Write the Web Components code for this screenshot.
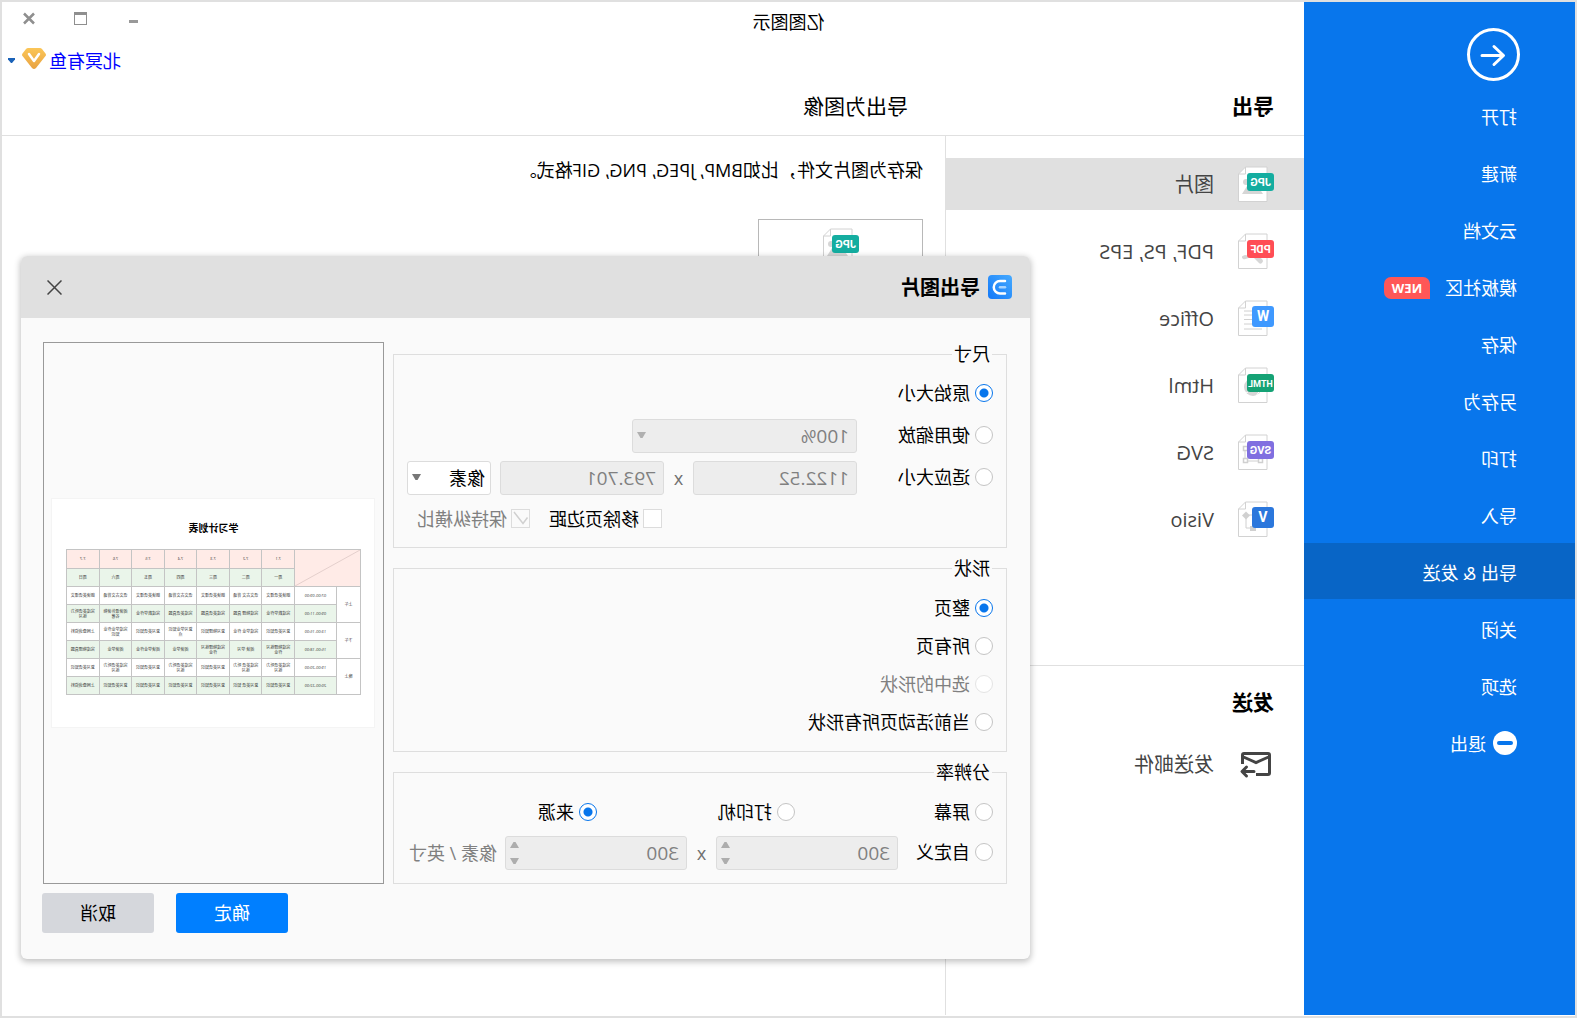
<!DOCTYPE html>
<html lang="zh-CN">
<head>
<meta charset="utf-8">
<title>亿图图示</title>
<style>
  html, body { margin: 0; }
  body {
    font-family: "Open Sans", "Noto Sans CJK SC", sans-serif;
    font-size: 18px; line-height: 24px; color: #000; background: #fff;
  }
</style>
</head>
<body>
<app-frame>
  <side-nav slot="nav">
    <nav-item>打开</nav-item>
    <nav-item>新建</nav-item>
    <nav-item>云文档</nav-item>
    <nav-item badge="NEW">模板社区</nav-item>
    <nav-item>保存</nav-item>
    <nav-item>另存为</nav-item>
    <nav-item>打印</nav-item>
    <nav-item>导入</nav-item>
    <nav-item current>导出 &amp; 发送</nav-item>
    <nav-item>关闭</nav-item>
    <nav-item>选项</nav-item>
    <nav-item exit>退出</nav-item>
  </side-nav>
  <title-bar slot="top">亿图图示</title-bar>
  <user-bar slot="top">北冥有鱼</user-bar>
  <format-section slot="list" heading="导出" main>
    <format-item kind="jpg" current>图片</format-item>
    <format-item kind="pdf">PDF, PS, EPS</format-item>
    <format-item kind="office">Office</format-item>
    <format-item kind="html">Html</format-item>
    <format-item kind="svg">SVG</format-item>
    <format-item kind="visio">Visio</format-item>
  </format-section>
  <format-section slot="list" heading="发送">
    <format-item kind="mail">发送邮件</format-item>
  </format-section>
  <export-pane slot="content">保存为图片文件，比如BMP, JPEG, PNG, GIF格式。</export-pane>

  <export-dialog slot="dialog" heading="导出图片">
    <option-group legend="尺寸" kind="size">
      <form-row><ui-radio checked>原始大小</ui-radio></form-row>
      <form-row>
        <ui-radio style="width:136px">使用缩放</ui-radio>
        <ui-select label="缩放" value="100%" disabled style="width:225px"></ui-select>
      </form-row>
      <form-row>
        <ui-radio style="width:136px">适应大小</ui-radio>
        <ui-field label="宽度" value="1122.52" style="flex:1"></ui-field>
        <times-sign>x</times-sign>
        <ui-field label="高度" value="793.701" style="flex:1"></ui-field>
        <ui-select label="单位" value="像素" style="width:84px;margin-left:9px"></ui-select>
      </form-row>
      <form-row end>
        <ui-check>移除页边距</ui-check>
        <ui-check checked disabled>保持纵横比</ui-check>
      </form-row>
    </option-group>
    <option-group legend="形状" kind="shape">
      <form-row><ui-radio checked>整页</ui-radio></form-row>
      <form-row><ui-radio>所有页</ui-radio></form-row>
      <form-row><ui-radio disabled>选中的形状</ui-radio></form-row>
      <form-row><ui-radio>当前活动页所有形状</ui-radio></form-row>
    </option-group>
    <option-group legend="分辨率" kind="dpi">
      <form-row>
        <ui-radio style="width:198px">屏幕</ui-radio>
        <ui-radio style="width:198px">打印机</ui-radio>
        <ui-radio checked>来源</ui-radio>
      </form-row>
      <form-row>
        <ui-radio style="width:95px">自定义</ui-radio>
        <ui-field spin label="水平分辨率" value="300" style="width:182px"></ui-field>
        <times-sign>x</times-sign>
        <ui-field spin label="垂直分辨率" value="300" style="width:182px"></ui-field>
        <unit-text>像素 / 英寸</unit-text>
      </form-row>
    </option-group>
    <page-preview slot="preview"></page-preview>
    <ui-button slot="actions" primary>确定</ui-button>
    <ui-button slot="actions">取消</ui-button>
  </export-dialog>
</app-frame>

<script>
const define = (name, render) => customElements.define(name, class extends HTMLElement {
  connectedCallback() {
    if (this.shadowRoot) return;
    const t = document.createElement('template');
    t.innerHTML = '<style>*{box-sizing:border-box}button,input,select{font:inherit;color:inherit;margin:0}</style>' + render(this);
    this.attachShadow({ mode: 'open' }).append(t.content.cloneNode(true));
  }
});
const on = (el, name) => el.hasAttribute(name) ? name : '';

/* The whole window is flipped left to right. */
define('app-frame', () => `
<style>
  :host { display: grid; grid-template-columns: 271px 1fr; position: relative; box-sizing: border-box;
    min-height: 100vh; border: 2px solid #e0e0e0; padding-bottom: 1px; background: #fff; transform: scaleX(-1); overflow: hidden; }
  main { display: flex; flex-direction: column; min-width: 0; }
  .heads, .body { display: grid; grid-template-columns: 359px 1fr; }
  .heads { height: 60px; align-items: center; border-bottom: 1px solid #e0e0e0; }
  h1, h2 { margin: 0; font-size: 21px; line-height: 28px; }
  h1 { padding-left: 30px; font-weight: 700; }
  h2 { padding-left: 37px; font-weight: inherit; }
  .body { flex: 1; }
  .list { border-right: 1px solid #e0e0e0; }
</style>
<slot name="nav"></slot>
<main>
  <slot name="top"></slot>
  <div class="heads"><h1>导出</h1><h2>导出为图像</h2></div>
  <div class="body"><div class="list"><slot name="list"></slot></div><slot name="content"></slot></div>
</main>
<slot name="dialog"></slot>`);

define('side-nav', () => `
<style>
  :host { display: block; background: #0876ec; color: #fff; padding-top: 26px; }
  button { display: block; width: 53px; height: 53px; margin: 0 0 6px 55px; padding: 0; border: 0; background: none; }
  svg { display: block; }
  nav { display: flex; flex-direction: column; gap: 1px; }
</style>
<button aria-label="返回"><svg width="53" height="53" viewBox="0 0 53 53" fill="none" stroke="#fff" stroke-width="3" stroke-linecap="round" stroke-linejoin="round"><circle cx="26.500" cy="26.500" r="25"/><path d="M38 27.500H17M26 18.500l-9.500 9 9.500 9"/></svg></button>
<nav><slot></slot></nav>`);

define('nav-item', el => `
<style>
  :host { display: block; }
  a { display: flex; align-items: center; height: 56px; padding: 3px 0 0 58px; color: inherit; text-decoration: none; }
  a.current { background: #0865c6; }
  .badge { margin-left: 15px; width: 46px; height: 22px; border-radius: 7px 7px 7px 0; background: #ff5757;
    font-size: 13px; line-height: 22px; font-weight: 700; text-align: center; }
  svg { margin: 0 7px 2px 0; }
</style>
<a href="#" class="${on(el, 'current')}">${on(el, 'exit') ? '<svg width="24" height="24" viewBox="0 0 24 24"><circle cx="12" cy="12" r="12" fill="#fff"/><rect x="4" y="10" width="16" height="4" rx="2" fill="#0876ec"/></svg>' : ''}<slot></slot>${on(el, 'badge') ? `<span class="badge">${el.getAttribute('badge')}</span>` : ''}</a>`);

define('title-bar', () => `
<style>
  :host { display: grid; grid-template-columns: 1fr 271px; height: 42px; }
  .title { text-align: center; line-height: 40px; }
  .controls { display: flex; justify-content: flex-end; padding-right: 1px; }
  button { width: 52px; height: 33px; padding: 0; border: 0; background: none; display: grid; place-items: center; }
</style>
<div class="title"><slot></slot></div>
<div class="controls">
  <button aria-label="最小化"><svg width="13" height="13" viewBox="0 0 13 13"><rect x="1" y="8" width="9" height="3" fill="#999"/></svg></button>
  <button aria-label="最大化"><svg width="13" height="13" viewBox="0 0 13 13"><path d="M0 0h13v13H0zM1 3v9h11V3z" fill="#8f8f8f" fill-rule="evenodd"/></svg></button>
  <button aria-label="关闭"><svg width="13" height="13" viewBox="0 0 13 13"><path d="M1 1.500l10 10m0-10l-10 10" stroke="#8f8f8f" stroke-width="2.500"/></svg></button>
</div>`);

define('user-bar', () => `
<style>
  :host { display: flex; justify-content: flex-end; align-items: center; gap: 3px; height: 32px; padding-right: 6px; }
  a { color: #00f; text-decoration: none; padding-top: 2px; }
  button { padding: 0; width: 11px; height: 20px; border: 0; background: none; display: grid; place-items: center end; }
  .gem { margin-bottom: 3px; }
</style>
<a href="#"><slot></slot></a>
<svg class="gem" width="24" height="21" viewBox="0 0 24 21"><defs><linearGradient id="g" x2="0" y2="1"><stop stop-color="#fbc658"/><stop offset="1" stop-color="#e8a242"/></linearGradient></defs><path d="M6 0h12q1 0 2 1l3.500 4.500q1 1.500 0 2.500L14 20q-2 2-4 0L.5 8q-1-1 0-2.500L4 1q1-1 2-1z" fill="url(#g)"/><path d="M7 6l5 7 5-7" fill="none" stroke="#fff" stroke-width="2.500" stroke-linecap="round" stroke-linejoin="round"/></svg>
<button aria-label="账户菜单"><svg width="7" height="5" viewBox="0 0 7 5"><path d="M0 0h7v1.500L4 5H3L0 1.500z" fill="#1a62b8"/></svg></button>`);

define('format-section', el => `
<style>
  :host { display: block; }
  .items { display: flex; flex-direction: column; gap: 15px; padding-top: 22px; }
  :host([main]) { height: 530px; box-sizing: border-box; border-bottom: 1px solid #e0e0e0; }
  h1 { margin: 0; padding: 22px 0 0 30px; font-size: 21px; line-height: 28px; font-weight: 700; }
</style>
${on(el, 'main') ? '' : `<h1>${el.getAttribute('heading')}</h1>`}
<div class="items"><slot></slot></div>`);

const SHEET = '<path d="M7 1h21.500l7 7v27.500H7z" fill="#fff" stroke="#d2d2d2"/><path d="M28.500 1v7h7" fill="none" stroke="#d2d2d2"/>';
const tag = (text, fill, size) => `<rect y="7" width="27" height="18" rx="3" fill="${fill}"/><text x="13.500" y="20" font-size="${size}">${text}</text>`;
const app = (text, fill) => `<rect y="6" width="22" height="21" rx="3" fill="${fill}"/><text x="11" y="21" font-size="14">${text}</text>`;
const ICONS = {
  jpg: SHEET + '<circle cx="28" cy="16" r="3" fill="#d6d6d6"/><path d="M11 28l8-12 5 7 3-3 5 8z" fill="#d6d6d6"/>' + tag('JPG', '#14ada0', 11),
  pdf: SHEET + '<path d="M12 30q-3-3 3-6l14-2q5 1 2 4-4 1-9-3l-6 6q-2 3-4 1z" fill="#d6d6d6"/>' + tag('PDF', '#ff4d55', 11),
  office: SHEET + '<path d="M12 11h18M12 15h18M12 19.500h18M12 24h18M12 29h18" stroke="#d0d0d0"/>' + app('W', '#3f99ff'),
  html: SHEET + '<circle cx="21" cy="20" r="9" fill="#d6d6d6"/><path d="M13 22l5 7m8-4l4 2" stroke="#fff"/>' + tag('HTML', '#15a275', 9),
  svg: SHEET + '<path d="M13 14h16v13H13z" fill="none" stroke="#d0d0d0"/><path d="M11.500 24.500h4v4h-4zM26.500 24.500h4v4h-4zM26.500 12.500h4v4h-4z" fill="#fff" stroke="#d0d0d0" stroke-width="1.500"/>' + tag('SVG', '#806fe0', 11),
  visio: SHEET + '<path d="M20 14h8v13h-8" fill="none" stroke="#d0d0d0"/><path d="M24 14.500l4-4 4 4-4 4zM18 25h6v5h-6z" fill="#d0d0d0"/>' + app('V', '#2b77dc'),
  mail: '<g transform="translate(3 6)" fill="none" stroke="#444" stroke-width="3"><path d="M28.500 12V3q0-1.500-1.500-1.500H3Q1.500 1.500 1.500 3v18q0 1.500 1.500 1.500h12"/><path d="M2.500 5L15 10.500 27.500 5"/><path d="M17 19.500h11M24.500 15l4.500 4.500-4.500 4.500" stroke-linecap="round" stroke-linejoin="round"/></g>'
};
define('format-icon', el => `
<style>
  :host { display: block; width: 36px; height: 36px; }
  svg { display: block; }
  text { fill: #fff; font-family: Roboto, sans-serif; font-weight: 700; text-anchor: middle; }
</style>
<svg width="36" height="36" viewBox="0 0 36 36" aria-hidden="true">${ICONS[el.getAttribute('kind')]}</svg>`);

define('format-item', el => `
<style>
  :host { display: block; }
  a { display: flex; align-items: center; gap: 24px; height: 52px; padding-left: 30px; color: #444; text-decoration: none; font-size: 20px; }
  a.current { background: #e0e0e0; }
  span { padding-top: 1px; }
</style>
<a href="#" class="${on(el, 'current')}"><format-icon kind="${el.getAttribute('kind')}"></format-icon><span><slot></slot></span></a>`);

define('export-pane', () => `
<style>
  :host { display: block; padding: 20px 22px 0; }
  p { margin: 0 0 35px; line-height: 28px; }
  button { display: grid; justify-items: center; align-content: start; width: 165px; height: 165px; padding: 8px 1px 0 0; border: 1px solid #b8b8b8; background: #fff; }
</style>
<p><slot></slot></p>
<button aria-label="JPG"><format-icon kind="jpg"></format-icon></button>`);

define('export-dialog', el => `
<style>
  :host { position: absolute; top: 254px; left: 545px; right: 19px; background: #fafafa; border-radius: 6px; overflow: hidden;
    box-shadow: 0 2px 6px 1px rgba(0,0,0,.24); }
  header { display: flex; align-items: center; gap: 8px; height: 62px; padding: 0 18px; background: #e0e0e0; }
  h2 { flex: 1; margin: 0; padding-top: 2px; font-size: 20px; line-height: 28px; font-weight: 700; }
  .close { width: 31px; height: 31px; padding: 0; border: 0; background: none; display: grid; place-items: center; }
  .body { display: grid; grid-template-columns: minmax(0, 1fr) 341px; gap: 9px; padding: 24px 22px 0 23px; }
  .options { display: flex; flex-direction: column; gap: 8px; min-width: 0; }
  footer { display: flex; justify-content: flex-end; gap: 22px; padding: 9px 21px 26px; }
</style>
<header>
  <svg width="24" height="24" viewBox="0 0 24 24"><defs><linearGradient id="b" x1="0" y1="0" x2="1" y2="1"><stop stop-color="#46aaff"/><stop offset="1" stop-color="#1278f8"/></linearGradient></defs><rect width="24" height="24" rx="4" fill="url(#b)"/><path d="M7 6h5a6 6 0 0 1 0 12.500H7" fill="none" stroke="#fff" stroke-width="2.500" stroke-linecap="round"/><path d="M7 12.200h5" stroke="#a8d4ff" stroke-width="2.500" stroke-linecap="round"/></svg>
  <h2>${el.getAttribute('heading')}</h2>
  <button class="close" aria-label="关闭"><svg width="15" height="15" viewBox="0 0 15 15"><path d="M.5.5l14 14m0-14l-14 14" stroke="#444" stroke-width="1.500"/></svg></button>
</header>
<div class="body"><div class="options"><slot></slot></div><slot name="preview"></slot></div>
<footer><slot name="actions"></slot></footer>`);

define('option-group', el => `
<style>
  :host { display: block; }
  fieldset { margin: 0; border: 1px solid #dedede; min-width: 0; padding: 11px 13px 10px; }
  legend { height: 24px; padding: 0 2px; margin: 0 0 0 1px; }
  .rows { display: flex; flex-direction: column; gap: 8px; }
  :host([kind=shape]) fieldset { padding: 12px 13px 11px; }
  :host([kind=shape]) .rows { gap: 4px; }
  :host([kind=dpi]) fieldset { padding: 12px 13px 13px; }
  :host([kind=dpi]) .rows { gap: 6px; }
</style>
<fieldset><legend>${el.getAttribute('legend')}</legend><div class="rows"><slot></slot></div></fieldset>`);

define('form-row', () => `
<style>
  :host { display: flex; align-items: center; height: 34px; }
  :host([end]) { justify-content: flex-end; gap: 19px; padding-right: 10px; }
</style><slot></slot>`);

define('times-sign', () => `<style>:host { display: block; width: 29px; text-align: center; color: #707070; }</style><slot></slot>`);
define('unit-text', () => `<style>:host { display: block; margin-left: 8px; white-space: nowrap; color: #808080; }</style><slot></slot>`);

define('ui-radio', el => `
<style>
  :host { display: block; white-space: nowrap; }
  label { display: inline-flex; align-items: center; gap: 5px; }
  input { appearance: none; width: 18px; height: 18px; border: 1px solid #c4c4c4; border-radius: 50%; background: #fff; }
  input:checked { border-color: #0876ec; background: radial-gradient(circle, #0876ec 4px, #fff 5px); }
  :host([disabled]) { color: #808080; }
  :host([disabled]) input { border-color: #e4e4e4; }
</style>
<label><input type="radio" ${on(el, 'checked')} ${on(el, 'disabled')}><slot></slot></label>`);

define('ui-check', el => `
<style>
  :host { display: block; white-space: nowrap; }
  label { display: inline-flex; align-items: center; gap: 4px; }
  .box { display: grid; }
  .box > * { grid-area: 1 / 1; }
  input { appearance: none; width: 19px; height: 19px; border: 1px solid #dcdcdc; background: #fff; }
  :host([disabled]) { color: #808080; }
  :host([disabled]) input { background: #fafafa; }
  svg { pointer-events: none; }
</style>
<label><span class="box"><input type="checkbox" ${on(el, 'checked')} ${on(el, 'disabled')}>${on(el, 'checked') ? '<svg width="19" height="19" viewBox="0 0 19 19"><path d="M2.500 8.500l4.500 6L16 3" fill="none" stroke="#d0d0d0" stroke-width="1.500"/></svg>' : ''}</span><slot></slot></label>`);

define('ui-select', el => `
<style>
  :host { display: grid; box-sizing: border-box; align-items: center; }
  select, svg { grid-area: 1 / 1; }
  select { appearance: none; width: 100%; height: 34px; padding: 0 9px 0 5px; border: 1px solid #dcdcdc; border-radius: 3px; background: #fff; opacity: 1; color: #000; }
  select:disabled { background: #ededed; color: #808080; padding-left: 7px; font-size: 19px; }
  svg { justify-self: end; margin: 0 5px 2px 0; pointer-events: none; }
</style>
<select aria-label="${el.getAttribute('label')}" ${on(el, 'disabled')}><option>${el.getAttribute('value')}</option></select>
<svg width="9" height="7" viewBox="0 0 9 7"><path d="M0 0h9L5.500 6h-2z" fill="${on(el, 'disabled') ? '#b0b0b0' : '#777'}"/></svg>`);

define('ui-field', el => `
<style>
  :host { display: flex; align-items: center; box-sizing: border-box; height: 34px; border: 1px solid #dcdcdc; border-radius: 3px; background: #ededed; min-width: 0; }
  input { flex: 1; min-width: 0; height: 32px; border: 0; padding: 0 7px; background: none; color: #808080; font-size: 19px; appearance: none; outline: 0; }
  svg { margin-right: 4px; }
</style>
<input type="text" inputmode="decimal" aria-label="${el.getAttribute('label')}" value="${el.getAttribute('value')}" disabled>
${on(el, 'spin') ? '<svg width="9" height="22" viewBox="0 0 9 22" fill="#adadad"><path d="M0 6h9L5.500 0h-2zM0 16h9l-3.500 6h-2z"/></svg>' : ''}`);

define('ui-button', el => `
<style>
  :host { display: block; }
  button { display: block; width: 112px; height: 40px; border: 0; border-radius: 3px; background: #d5d7dc; color: #000; }
  :host([primary]) button { background: #007fff; color: #fff; }
</style><button><slot></slot></button>`);

/* Miniature of the page that will be exported: a weekly study plan. */
const PLAN = [
  ['上午', '07:00-09:00', ['朗读英语课文', '语文古文 背诵', '朗读英语课文', '语文古文背诵', '朗读英语课文', '语文古文背诵', '朗读英语课文']],
  ['', '09:00-11:00', ['完成数学作业', '完成物理 真题', '完成英语真题', '完成英语真题', '完成数学作业', '阅读课外读物名著', '完成英语听力练习']],
  ['下午', '13:00-15:00', ['复习英语知识', '完成学业 作业', '复习物理知识', '复习学业知识点', '复习英语知识', '完成学业作业知识', '上网查询资料']],
  ['', '15:00-18:00', ['完成物理练习作业', '阅读 学习', '完成物理练习作业', '阅读学业', '阅读学业作业', '阅读学业', '完成物理真题']],
  ['晚上', '19:00-20:00', ['完成英语听力练习', '完成英语 听力练习', '复习英语知识', '完成英语听力练习', '复习英语知识', '完成英语听力练习', '复习英语知识']],
  ['', '20:00-22:00', ['复习英语知识', '复习英语 知识', '复习英语知识', '复习英语知识', '复习英语知识', '复习英语知识', '上网查询资料']]
];
define('page-preview', () => `
<style>
  :host { display: grid; place-items: center; border: 1px solid #999; }
  .page { width: 322px; height: 228px; background: #fff; outline: 1px solid #f4f4f4; display: flex; flex-direction: column; align-items: center; }
  h3 { margin: 22px 0 14px; font-size: 10px; line-height: 14px; font-weight: 700; }
  table { width: 295px; border-collapse: collapse; table-layout: fixed; font-size: 4px; line-height: 5px; text-align: center; color: #333; }
  td, th { padding: 0 3px; height: 18px; border: 1px solid #c4c4c4; font-weight: 400; }
  .p { width: 24px; } .t { width: 42px; }
  .pink > * { background: #ffebe7; }
  .pink > .corner { padding: 0; height: 36px; }
  .corner svg { display: block; width: 100%; height: 36px; }
  .green > :not(.period) { background: #eaf5ea; }
</style>
<div class="page">
  <h3>学习计划表</h3>
  <table>
    <colgroup><col class="p"><col class="t"><col span="7"></colgroup>
    <tr class="pink"><td class="corner" colspan="2" rowspan="2"><svg viewBox="0 0 66 36" preserveAspectRatio="none"><path d="M0 0l66 36" stroke="#e4cfcc"/></svg></td>${[1, 2, 3, 4, 5, 6, 7].map(d => `<th>7.${d}</th>`).join('')}</tr>
    <tr class="green">${['一', '二', '三', '四', '五', '六', '日'].map(d => `<th>周${d}</th>`).join('')}</tr>
    ${PLAN.map(([p, t, cells], i) => `<tr class="${i % 2 ? 'green' : ''}">${p ? `<td class="period" rowspan="2">${p}</td>` : ''}<td>${t}</td>${cells.map(c => `<td>${c}</td>`).join('')}</tr>`).join('')}
  </table>
</div>`);
</script>
</body>
</html>
